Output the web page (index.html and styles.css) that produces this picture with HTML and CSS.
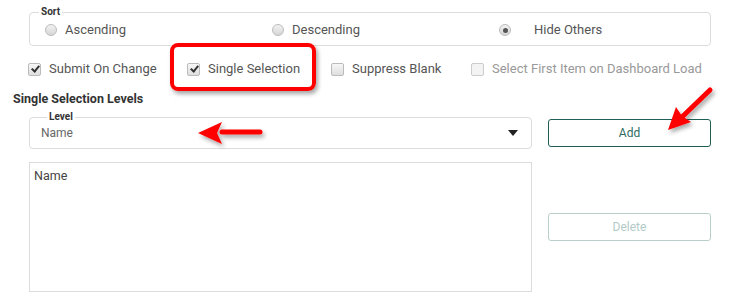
FILE: index.html
```html
<!DOCTYPE html>
<html lang="en">
<head>
  <meta charset="UTF-8" />
  <meta name="viewport" content="width=device-width, initial-scale=1.0" />
  <title>Selection settings</title>
  <link rel="stylesheet" href="styles.css">
</head>
<body>
  <div class="panel">
    <fieldset class="group sort-group">
      <legend>Sort</legend>
      <div class="radio-row">
        <label class="opt"><span class="radio"></span>Ascending</label>
        <label class="opt"><span class="radio"></span>Descending</label>
        <label class="opt wide"><span class="radio on"></span>Hide Others</label>
      </div>
    </fieldset>

    <div class="check-row">
      <label class="opt c1"><span class="box checked"></span>Submit On Change</label>
      <label class="opt c2"><span class="box checked"></span>Single Selection</label>
      <label class="opt c3"><span class="box"></span>Suppress Blank</label>
      <label class="opt c4 disabled"><span class="box"></span>Select First Item on Dashboard Load</label>
    </div>

    <h3 class="section-title">Single Selection Levels</h3>

    <div class="levels">
      <div class="levels-left">
        <fieldset class="group level-group">
          <legend>Level</legend>
          <div class="select">
            <span>Name</span>
            <span class="caret"></span>
          </div>
        </fieldset>
        <div class="list">
          <div class="list-item">Name</div>
        </div>
      </div>
      <div class="levels-right">
        <button class="btn">Add</button>
        <button class="btn disabled-btn">Delete</button>
      </div>
    </div>
  </div>

  <!-- annotations -->
  <div class="highlight"></div>
  <svg class="arrow arrow-left" width="90" height="40" viewBox="0 0 90 40">
    <defs>
      <filter id="sh" x="-20%" y="-40%" width="150%" height="200%">
        <feDropShadow dx="2" dy="3" stdDeviation="2" flood-color="#000" flood-opacity="0.35"/>
      </filter>
    </defs>
    <g filter="url(#sh)">
      <line x1="30" y1="19" x2="68" y2="19" stroke="#f00" stroke-width="5" stroke-linecap="round"/>
      <polygon points="6,20 30,9 25,20 30,31" fill="#f00"/>
    </g>
  </svg>
  <svg class="arrow arrow-add" width="70" height="70" viewBox="0 0 70 70">
    <g filter="url(#sh)">
      <line x1="58" y1="6" x2="30" y2="33" stroke="#f00" stroke-width="5" stroke-linecap="round"/>
      <polygon points="16,46 24,23 30,32 39,38" fill="#f00"/>
    </g>
  </svg>
</body>
</html>
```

FILE: styles.css
```css
body {
  margin: 0;
  font-family: Roboto, "Liberation Sans", sans-serif;
  font-size: 13px;
  color: #555;
  background: #fff;
}
.panel {
  padding: 6px 24px 0 13px;
  position: relative;
}
.group {
  border: 1px solid #dcdcdc;
  border-radius: 4px;
  margin: 0 0 0 16px;
  padding: 0;
}
.group legend {
  font-size: 10px;
  font-weight: bold;
  color: #333;
  padding: 0 2px;
  line-height: 12px;
}
.sort-group {
  width: 682px;
  height: 40px;
  box-sizing: border-box;
}
.sort-group legend {
  margin-left: 9px;
}
.radio-row {
  display: grid;
  grid-template-columns: 227px 227px 1fr;
  padding-left: 15px;
  margin-top: 4px;
}
.opt {
  display: flex;
  align-items: center;
  line-height: 16px;
}
.radio {
  width: 12px;
  height: 12px;
  border-radius: 50%;
  border: 1px solid #bbb;
  background: linear-gradient(#f2f2f2, #d6d6d6);
  box-sizing: border-box;
  margin-right: 8px;
  position: relative;
}
.radio.on::after {
  content: "";
  position: absolute;
  left: 2.5px;
  top: 2.5px;
  width: 5px;
  height: 5px;
  border-radius: 50%;
  background: #555;
}
.opt.wide .radio {
  margin-right: 23px;
}
.check-row {
  display: flex;
  margin: 15px 0 0 15px;
  height: 16px;
}
.box {
  width: 13px;
  height: 13px;
  border: 1px solid #bbb;
  border-radius: 2px;
  background: linear-gradient(#f7f7f7, #dedede);
  box-sizing: border-box;
  margin-right: 8px;
  position: relative;
}
.box.checked::after {
  content: "";
  position: absolute;
  left: 3.5px;
  top: 0.5px;
  width: 3px;
  height: 6px;
  border: solid #333;
  border-width: 0 2px 2px 0;
  transform: rotate(40deg);
}
.c1 { width: 159px; }
.c2 { width: 144px; }
.c3 { width: 140px; }
.disabled { color: #999; }
.disabled .box {
  border-color: #ccc;
  background: #f3f3f3;
}
.section-title {
  font-size: 12.5px;
  font-weight: bold;
  color: #333;
  margin: 14px 0 0;
  line-height: 15px;
}
.levels {
  display: flex;
  margin-top: 5px;
}
.levels-left {
  width: 519px;
}
.level-group {
  height: 38px;
  box-sizing: border-box;
}
.level-group legend {
  margin-left: 17px;
}
.select {
  display: flex;
  justify-content: space-between;
  align-items: center;
  padding: 0 13px 0 11px;
  margin-top: 2px;
  color: #666;
  font-size: 12px;
  line-height: 16px;
}
.caret {
  width: 0;
  height: 0;
  border-left: 5px solid transparent;
  border-right: 5px solid transparent;
  border-top: 6px solid #222;
}
.list {
  margin: 13px 0 0 16px;
  height: 130px;
  border: 1px solid #dcdcdc;
  box-sizing: border-box;
  padding: 5px 4px;
}
.list-item {
  color: #444;
  font-size: 12.5px;
  line-height: 16px;
}
.levels-right {
  display: flex;
  flex-direction: column;
  margin: 8px 0 0 16px;
}
.btn {
  width: 163px;
  height: 28px;
  border: 1px solid #1f5f55;
  border-radius: 3px;
  background: #fff;
  color: #2e6b61;
  font-family: Roboto, "Liberation Sans", sans-serif;
  font-size: 12px;
  padding: 0;
}
.disabled-btn {
  margin-top: 66px;
  border-color: #b9cfcc;
  color: #b3cbc7;
}
.highlight {
  position: absolute;
  left: 170px;
  top: 43px;
  width: 146px;
  height: 48px;
  box-sizing: border-box;
  border: 4px solid #f00;
  border-radius: 8px;
  box-shadow: 2px 3px 4px rgba(0, 0, 0, 0.35);
}
.arrow {
  position: absolute;
}
.arrow-left {
  left: 192px;
  top: 113px;
}
.arrow-add {
  left: 652px;
  top: 84px;
}
```
